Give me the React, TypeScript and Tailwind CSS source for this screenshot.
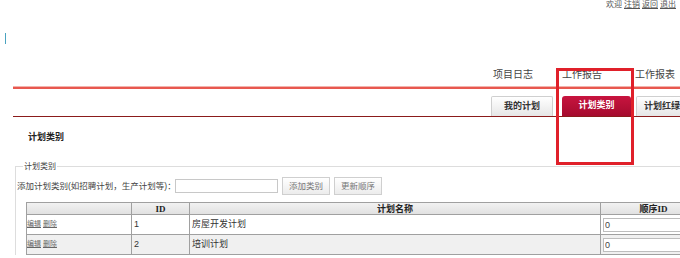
import React from 'react';

const font = { fontFamily: '"Liberation Sans", "Noto Sans CJK SC", sans-serif' };

const rows = [
  { id: 1, name: '房屋开发计划', order: 0 },
  { id: 2, name: '培训计划', order: 0 },
];

const App: React.FC = () => {
  return (
    <div
      className="relative w-[680px] h-[258px] overflow-hidden bg-white text-[#333] font-['Liberation_Sans','Noto_Sans_CJK_SC',sans-serif]"
    >
      {/* top links */}
      <div className="h-[9px] overflow-hidden">
        <div className="pl-[606px] flex gap-[2px] text-[8px] leading-[9px] text-[#555] whitespace-nowrap">
          <span>欢迎</span>
          <span className="underline">注销</span>
          <span className="underline">返回</span>
          <span className="underline">退出</span>
        </div>
      </div>

      <div className="ml-[5px] mt-[24px] w-[1px] h-[11px] bg-[#4aa3c0]" />

      {/* nav */}
      <div className="mt-[25px] h-[17px] flex text-[10px] leading-[12px] text-[#444] whitespace-nowrap">
        <span className="ml-[493px] shrink-0">项目日志</span>
        <span className="ml-[29px] shrink-0">工作报告</span>
        <span className="ml-[33px] shrink-0">工作报表</span>
      </div>
      <div className="ml-[13px] h-[3px] bg-[#e8584f] border-t border-[#f3b3ad]" />

      {/* tabs */}
      <div className="mt-[7px] flex items-end h-[20px] text-[9px] font-bold whitespace-nowrap">
        <div className="ml-[491px] shrink-0 w-[62px] h-[20px] flex items-center justify-center border border-b-0 border-[#cfcfcf] rounded-t-[2px] bg-gradient-to-b from-white to-[#e6e6e6] text-[#333]">
          我的计划
        </div>
        <div className="ml-[9px] shrink-0 w-[69px] h-[20px] flex items-center justify-center rounded-t-[3px] bg-gradient-to-b from-[#c8143f] to-[#a50b2e] text-white">
          计划类别
        </div>
        <div className="ml-[5px] shrink-0 w-[70px] h-[20px] flex items-center pl-[7px] border border-b-0 border-[#cfcfcf] rounded-t-[2px] bg-gradient-to-b from-white to-[#e6e6e6] text-[#333]">
          计划红绿灯
        </div>
      </div>
      <div className="ml-[13px] h-[1px] bg-[#8b1b1b]" />

      <div className="mt-[14px] pl-[28px] text-[9px] leading-[12px] font-bold text-[#222]">计划类别</div>

      {/* fieldset */}
      <fieldset className="mt-[18px] ml-[15px] border-t border-l border-[#dddddd] pl-[1px]">
        <legend className="ml-[6px] px-[1px] text-[8px] leading-[11px] text-[#444]">计划类别</legend>
        <div className="mt-[5px] flex items-center h-[18px] text-[8.5px] text-[#444] whitespace-nowrap">
          <span className="w-[158px]">添加计划类别(如招聘计划，生产计划等)：</span>
          <input className="w-[103px] h-[14px] border border-[#c8c8c8] bg-white outline-none" />
          <button className="ml-[4px] w-[48px] h-[18px] border border-[#cfcfcf] bg-gradient-to-b from-white to-[#ececec] text-[#777]">
            添加类别
          </button>
          <button className="ml-[4px] w-[48px] h-[18px] border border-[#cfcfcf] bg-gradient-to-b from-white to-[#ececec] text-[#777]">
            更新顺序
          </button>
        </div>

        <table className="mt-[7px] ml-[9px] w-[680px] border-collapse table-fixed text-[8px]" style={font}>
          <colgroup>
            <col className="w-[105px]" />
            <col className="w-[58px]" />
            <col className="w-[411px]" />
            <col className="w-[106px]" />
          </colgroup>
          <thead>
            <tr className="h-[12px] bg-gradient-to-b from-[#f2f2f2] to-[#e0e0e0] font-['Liberation_Serif','Noto_Sans_CJK_SC',serif] text-[9px] leading-[10px] font-bold text-[#222]">
              <th className="border border-[#a0a0a0] p-0" />
              <th className="border border-[#a0a0a0] p-0">ID</th>
              <th className="border border-[#a0a0a0] p-0">计划名称</th>
              <th className="border border-[#a0a0a0] p-0">顺序ID</th>
            </tr>
          </thead>
          <tbody>
            {rows.map((r, i) => (
              <tr key={r.id} className={`h-[20px] ${i % 2 === 1 ? 'bg-[#f0f0f0]' : 'bg-white'}`}>
                <td className="border border-[#a0a0a0] p-0 text-[7px] text-[#666] whitespace-nowrap">
                  <span className="underline">编辑</span> <span className="underline">删除</span>
                </td>
                <td className="border border-[#a0a0a0] pl-[2px] text-[9px] text-[#333]">{r.id}</td>
                <td className="border border-[#a0a0a0] pl-[2px] text-[9px] text-[#333]">{r.name}</td>
                <td className="border border-[#a0a0a0] pl-[2px] pr-0">
                  <input
                    defaultValue={r.order}
                    className="w-[100px] h-[14px] border border-[#bdbdbd] bg-white pl-[1px] text-[9px] text-[#444] outline-none"
                  />
                </td>
              </tr>
            ))}
          </tbody>
        </table>
      </fieldset>

      {/* red annotation box drawn over the page */}
      <div className="absolute left-[556px] top-[68px] w-[78px] h-[97px] border-[3px] border-[#e0202a]" />
    </div>
  );
};

export default App;
